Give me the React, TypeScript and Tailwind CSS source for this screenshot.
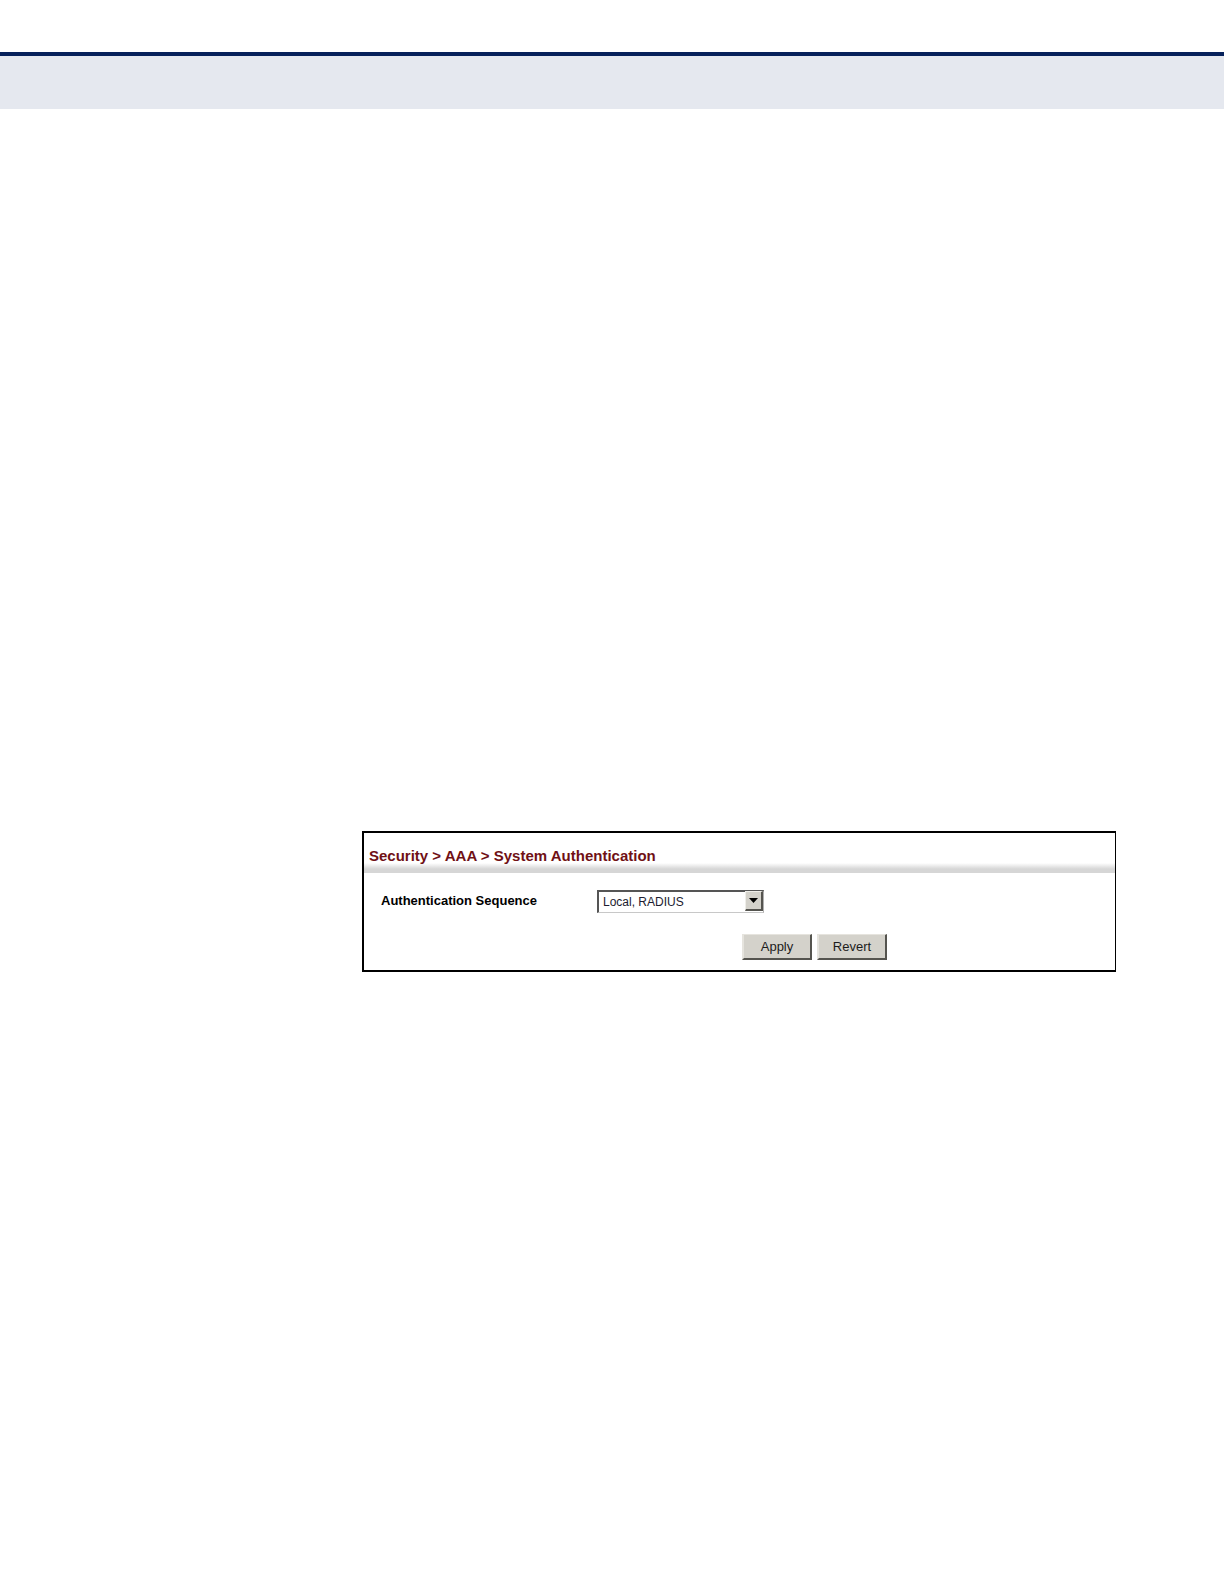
import React, { useState } from 'react';

const sequences = ['Local', 'RADIUS', 'TACACS', 'Local, RADIUS', 'RADIUS, Local', 'Local, TACACS', 'TACACS, Local'];

const buttonClass =
  'h-[26px] w-[70px] border-t border-l-2 border-r-2 border-b-2 border-t-[#e6e4de] border-l-[#e6e4de] border-r-[#55544f] border-b-[#55544f] bg-[#d4d2cb] text-[13px] leading-5 text-[#1c1c1c]';

const App: React.FC = () => {
  const [sequence, setSequence] = useState('Local, RADIUS');

  return (
    <div className="min-h-screen bg-white font-['Liberation_Sans',Arial,sans-serif] text-black">
      {/* Page banner */}
      <header className="pt-[52px]">
        <div className="h-[57px] border-t-4 border-[#06215b] bg-[#e5e8ef]" />
      </header>

      <main className="pt-[722px] pr-[108px] pb-16 pl-[362px]">
        <section className="border-2 border-r border-black pb-[10px]">
          <div className="flex h-10 flex-col justify-end bg-linear-to-b from-white from-75% to-[#d6d6d6] to-90%">
            <h1 className="pb-[7px] pl-[5px] text-[15px] leading-5 font-bold text-[#701015]">
              Security &gt; AAA &gt; System Authentication
            </h1>
          </div>

          <form onSubmit={(e) => e.preventDefault()}>
            <div className="flex items-center pt-4 pl-[17px]">
              <label htmlFor="sequence" className="w-[216px] text-[13px] leading-[23px] font-bold">
                Authentication Sequence
              </label>
              <div className="relative h-[23px] w-[167px]">
                <select
                  id="sequence"
                  value={sequence}
                  onChange={(e) => setSequence(e.target.value)}
                  className="h-full w-full appearance-none border-t-2 border-r border-b border-l-2 border-t-[#555555] border-r-[#b0b0b0] border-b-[#c8c8c8] border-l-[#555555] bg-white pl-1 text-[12px] leading-5 text-[#1c1c30]"
                >
                  {sequences.map((s) => (
                    <option key={s}>{s}</option>
                  ))}
                </select>
                {/* Drop-down arrow */}
                <span className="pointer-events-none absolute top-[2px] right-[1px] flex h-5 w-[18px] items-center justify-center border-t border-r-2 border-b-2 border-l border-t-[#efeee9] border-r-[#55544f] border-b-[#55544f] border-l-[#efeee9] bg-[#d4d2cb]">
                  <svg width="9" height="5" viewBox="0 0 9 5" aria-hidden="true">
                    <path d="M0 0h9L4.5 5z" fill="#000" />
                  </svg>
                </span>
              </div>
            </div>

            <div className="flex gap-[5px] pt-[22px] pl-[378px]">
              <button type="submit" className={buttonClass}>
                Apply
              </button>
              <button type="button" className={buttonClass} onClick={() => setSequence('Local, RADIUS')}>
                Revert
              </button>
            </div>
          </form>
        </section>
      </main>
    </div>
  );
};

export default App;
